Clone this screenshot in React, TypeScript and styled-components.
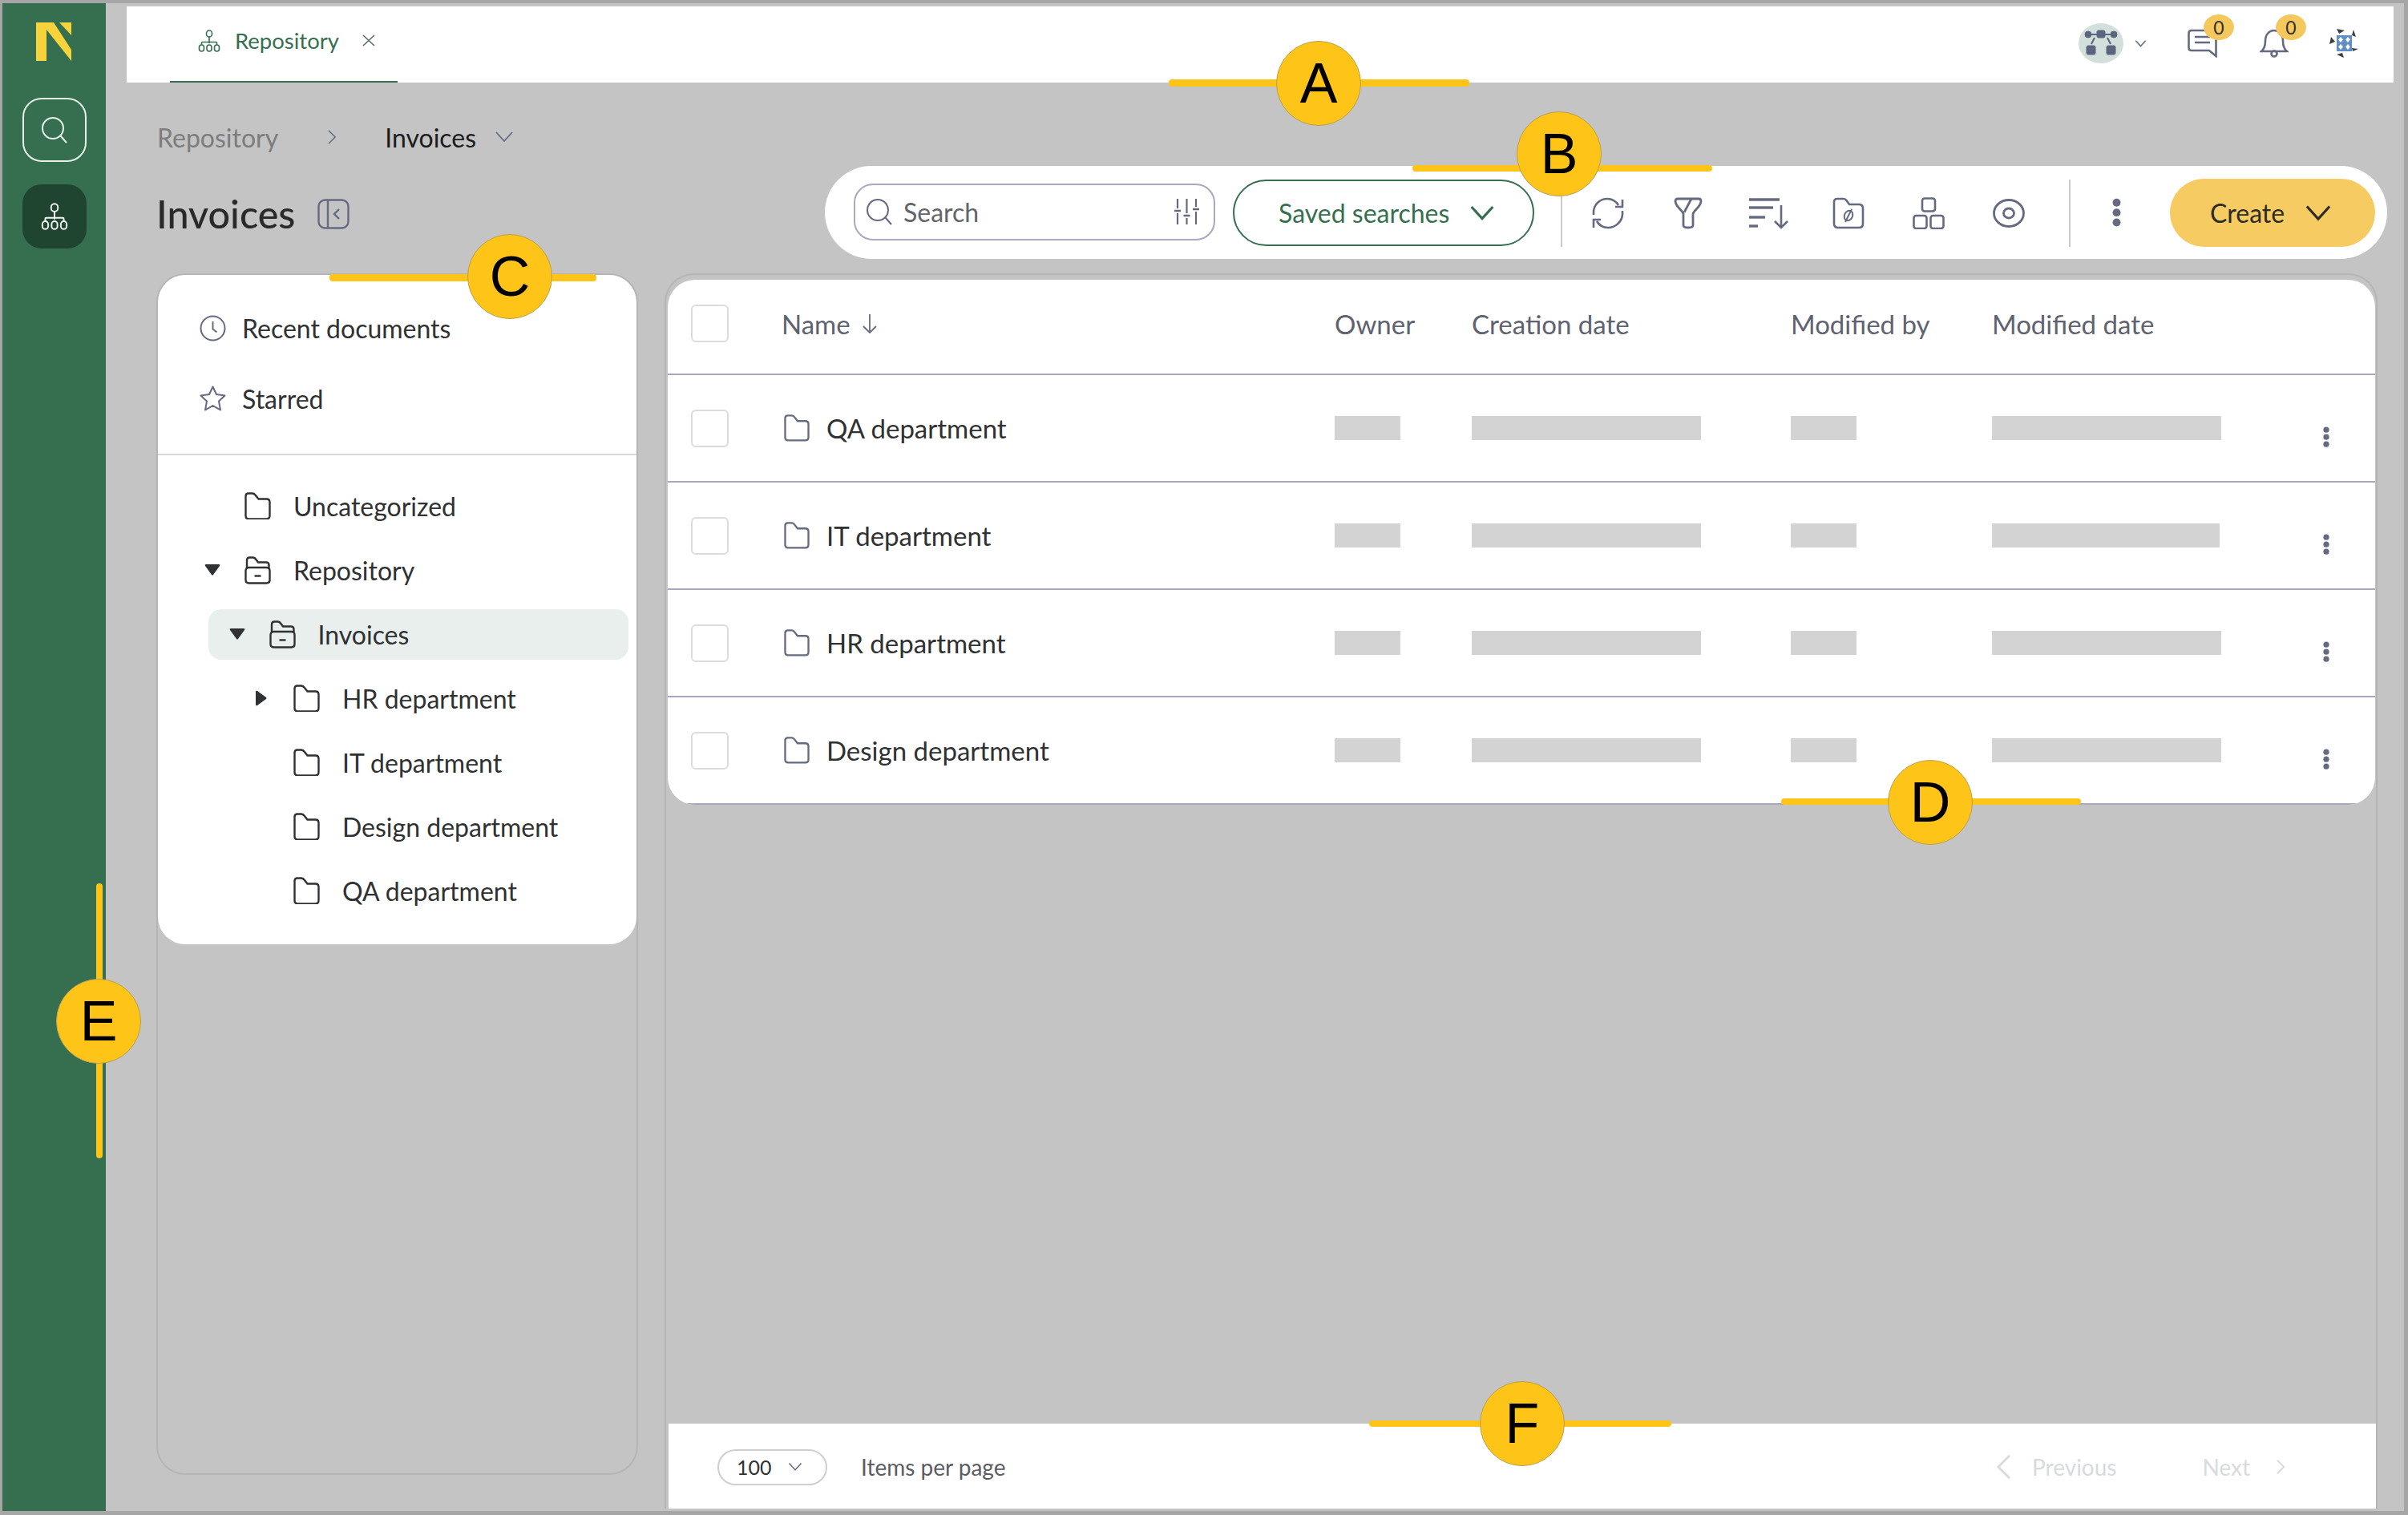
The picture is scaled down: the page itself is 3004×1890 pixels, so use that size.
import React from 'react';
import styled, { createGlobalStyle } from 'styled-components';

const GlobalStyle = createGlobalStyle`
  html, body {
    margin: 0;
    padding: 0;
    background: #c4c4c4;
  }
  * {
    box-sizing: border-box;
  }
`;

const green = '#356f50';
const ink = '#2f3133';
const slate = '#666a80';

/* ---------- icons ---------- */

const HierarchyIcon = ({ color, size }: { color: string; size: number }) => (
  <svg width={size} height={size} viewBox="0 0 28 28" fill="none" stroke={color} strokeWidth="1.6">
    <rect x="10.5" y="1" width="7" height="8" rx="3.5" />
    <path d="M14 9v8M4.5 19v-2.5a1 1 0 0 1 1-1h17a1 1 0 0 1 1 1V19" />
    <rect x="1.5" y="19" width="6" height="8" rx="3" />
    <rect x="11" y="19" width="6" height="8" rx="3" />
    <rect x="20.5" y="19" width="6" height="8" rx="3" />
  </svg>
);

const Chevron = ({ color, size, dir = 'down', weight = 2 }: { color: string; size: number; dir?: string; weight?: number }) => {
  const d: Record<string, string> = {
    down: 'M2 6l10 11L22 6',
    right: 'M7 2l10 10L7 22',
    left: 'M17 2L7 12l10 10',
  };
  return (
    <svg width={size} height={size} viewBox="0 0 24 24" fill="none" stroke={color} strokeWidth={weight}>
      <path d={d[dir]} />
    </svg>
  );
};

const FolderIcon = ({ color, size = 33 }: { color: string; size?: number }) => (
  <svg width={size} height={size * 1.06} viewBox="0 0 33 35" fill="none" stroke={color} strokeWidth="2.4">
    <path d="M1.5 29.5V5Q1.5 1.5 5 1.5H9.5Q12 1.5 13.5 3.5L17.5 8.5H27.5Q31.5 8.5 31.5 12.5V29.5Q31.5 33.5 27.5 33.5H5.5Q1.5 33.5 1.5 29.5Z" />
  </svg>
);

const OpenFolderIcon = ({ color }: { color: string }) => (
  <svg width="33" height="35" viewBox="0 0 33 35" fill="none" stroke={color} strokeWidth="2.4">
    <path d="M3 14V5Q3 1.5 6.5 1.5H10.5Q12.5 1.5 14 3.5L17 7.5H27Q30.5 7.5 30.5 11V14" />
    <path d="M1.5 18Q1.5 14 5.5 14H27.5Q31.5 14 31.5 18V29.5Q31.5 33.5 27.5 33.5H5.5Q1.5 33.5 1.5 29.5Z" />
    <path d="M12.5 24.5H20.5" />
  </svg>
);

const KebabIcon = ({ size, color }: { size: number; color: string }) => (
  <svg width={size} height={size * 3.3} viewBox="0 0 8 26" fill={color}>
    <circle cx="4" cy="4" r="3.6" />
    <circle cx="4" cy="13" r="3.6" />
    <circle cx="4" cy="22" r="3.6" />
  </svg>
);

const LogoMark = () => (
  <svg width="45" height="48" viewBox="0 0 45 48" fill="#f6d33b">
    <polygon points="0,0 22,0 44,34 44,48 13,9 13,48 0,48" />
    <polygon points="29,0 44,0 44,16" />
  </svg>
);

const SearchIcon = ({ color, size, weight = 2 }: { color: string; size: number; weight?: number }) => (
  <svg width={size} height={size} viewBox="0 0 34 34" fill="none" stroke={color} strokeWidth={weight}>
    <circle cx="15" cy="15" r="13" />
    <path d="M24.5 24.5L32 33" />
  </svg>
);

const SlidersIcon = () => (
  <svg width="33" height="34" viewBox="0 0 33 34" fill="none" stroke={slate} strokeWidth="2.2">
    <path d="M5 1v12M5 19v14M16.5 1v18M16.5 25v8M28 1v10M28 17v16" />
    <path d="M1 16h8M12.5 22h8M24 14h8" strokeWidth="2.6" />
  </svg>
);

const RefreshIcon = () => (
  <svg width="40" height="40" viewBox="0 0 40 40" fill="none" stroke={slate} strokeWidth="2.6">
    <path d="M2 22V17C3 9 10 2 19 2c6 0 11 3 14 8" />
    <path d="M38 17v5c-1 9-9 16-18 16-6 0-11-3-14-8" />
    <path d="M38 3v9H29M2 38V28h9" />
  </svg>
);

const FunnelIcon = () => (
  <svg width="36" height="40" viewBox="0 0 36 40" fill="none" stroke={slate} strokeWidth="2.8">
    <path d="M2 5Q2 2 5 2H31Q34 2 34 5C34 12 25 16 24 21V35Q24 38 18 38Q12 38 12 35V21C11 16 2 12 2 5Z" />
    <path d="M22 2L13 19" />
  </svg>
);

const SortIcon = () => (
  <svg width="49" height="40" viewBox="0 0 49 40" fill="none" stroke={slate}>
    <path d="M0 3H38" strokeWidth="3.4" />
    <path d="M0 13H30" strokeWidth="3.4" />
    <path d="M0 25H20" strokeWidth="3.4" />
    <path d="M0 36H11" strokeWidth="3.4" />
    <path d="M40 10V38M32 30l8 8 8-8" strokeWidth="2.6" />
  </svg>
);

const LinkedFolderIcon = () => (
  <svg width="40" height="40" viewBox="0 0 40 40" fill="none" stroke={slate} strokeWidth="2.6">
    <path d="M2 33V6Q2 2 6 2H14Q16 2 17.5 4L21 9H33Q38 9 38 14V33Q38 38 33 38H7Q2 38 2 33Z" />
    <ellipse cx="20" cy="23" rx="5" ry="6.5" strokeWidth="2" transform="rotate(25 20 23)" />
    <path d="M24 15l-8 16" strokeWidth="2" />
  </svg>
);

const BlocksIcon = () => (
  <svg width="40" height="40" viewBox="0 0 40 40" fill="none" stroke={slate} strokeWidth="2.6">
    <rect x="12" y="1.5" width="16" height="16" rx="3" />
    <rect x="1.5" y="23" width="16" height="16" rx="3" />
    <rect x="22.5" y="23" width="16" height="16" rx="3" />
  </svg>
);

const EyeIcon = () => (
  <svg width="40" height="36" viewBox="0 0 40 36" fill="none" stroke={slate} strokeWidth="2.8">
    <ellipse cx="20" cy="18" rx="18.5" ry="16.5" />
    <ellipse cx="20" cy="18" rx="6.5" ry="6" />
  </svg>
);

const ClockIcon = () => (
  <svg width="33" height="33" viewBox="0 0 33 33" fill="none" stroke={slate} strokeWidth="2">
    <circle cx="16.5" cy="16.5" r="15" />
    <path d="M16.5 8v9.5l5 4" />
  </svg>
);

const StarIcon = () => (
  <svg width="33" height="33" viewBox="0 0 33 33" fill="none" stroke={slate} strokeWidth="2" strokeLinejoin="round">
    <path d="M16.5 1.5l4.5 9.5 10.5 1.5-7.5 7 2 11-9.5-5.5L7 30.5l2-11-7.5-7L12 11z" />
  </svg>
);

const PanelToggleIcon = () => (
  <svg width="40" height="38" viewBox="0 0 40 38" fill="none" stroke={slate} strokeWidth="2.4">
    <rect x="1.5" y="1.5" width="37" height="35" rx="8" />
    <path d="M13 1.5v35" />
    <path d="M27 13l-6 6 6 6" />
  </svg>
);

const NetworkIcon = () => (
  <svg width="42" height="34" viewBox="0 0 42 34" fill="#5b6580" stroke="#5b6580">
    <rect x="16" y="1" width="10" height="9" rx="2" />
    <circle cx="5" cy="6" r="4" />
    <circle cx="37" cy="6" r="4" />
    <rect x="3" y="20" width="11" height="11" rx="2" />
    <rect x="28" y="20" width="11" height="11" rx="2" />
    <path d="M9 6h7M26 6h7M13 10l-4 8M29 10l4 8" fill="none" strokeWidth="2" />
  </svg>
);

const ChatIcon = () => (
  <svg width="37" height="36" viewBox="0 0 37 36" fill="none" stroke={slate} strokeWidth="2.6">
    <path d="M5 2H32Q35.5 2 35.5 5.5V34L27 27H5Q1.5 27 1.5 23.5V5.5Q1.5 2 5 2Z" />
    <path d="M9 10h19M9 17h19" />
  </svg>
);

const BellIcon = () => (
  <svg width="36" height="36" viewBox="0 0 36 36" fill="none" stroke={slate} strokeWidth="2.6">
    <path d="M2 28C6 25 7 20 7 15C7 7 12 2 18 2s11 5 11 13c0 5 1 10 5 13z" />
    <circle cx="18" cy="31" r="3.5" />
  </svg>
);

const Identicon = () => (
  <svg width="38" height="38" viewBox="0 0 38 38">
    <circle cx="19" cy="19" r="19" fill="#fff" />
    <rect x="10" y="9" width="19" height="20" fill="#5f8fc5" />
    <g fill="#fff">
      <polygon points="15,11 18,14.5 15,18 12,14.5" />
      <polygon points="24,11 27,14.5 24,18 21,14.5" />
      <polygon points="15,20 18,23.5 15,27 12,23.5" />
      <polygon points="24,20 27,23.5 24,27 21,23.5" />
    </g>
    <g fill="#3d3f44">
      <polygon points="10,1 20,3 13,7" />
      <polygon points="31,2 34,11 29,9" />
      <polygon points="37,26 30,29 29,25" />
      <polygon points="19,37 10,33 17,31" />
      <polygon points="1,20 3,11 8,17" />
    </g>
  </svg>
);

const ArrowDown = () => (
  <svg width="20" height="24" viewBox="0 0 20 24" fill="none" stroke={slate} strokeWidth="1.8">
    <path d="M10 0v23M2 15l8 8 8-8" />
  </svg>
);

const CloseIcon = () => (
  <svg width="16" height="15" viewBox="0 0 16 15" fill="none" stroke="#5a6b63" strokeWidth="1.6">
    <path d="M1 1l14 13M15 1L1 14" />
  </svg>
);

const CaretDown = () => (
  <svg width="20" height="14" viewBox="0 0 20 14" fill={ink}>
    <path d="M2 0h16q2 0 1 2l-8 11q-1 1-2 0L1 2Q0 0 2 0z" />
  </svg>
);

const CaretRight = () => (
  <svg width="14" height="20" viewBox="0 0 14 20" fill={ink}>
    <path d="M0 2q0-2 2-1l11 8q1 1 0 2L2 19q-2 1-2-1z" />
  </svg>
);

/* ---------- frame ---------- */

const Shell = styled.div`
  position: relative;
  display: flex;
  width: 3004px;
  height: 1890px;
  overflow: hidden;
  background: #c4c4c4;
  border-style: solid;
  border-color: #a6a6a6;
  border-width: 4px 5px 5px 3px;
  font-family: Lato, 'Open Sans', sans-serif;
  color: ${ink};
`;

const Sidebar = styled.aside`
  display: flex;
  flex-direction: column;
  align-items: center;
  flex: 0 0 129px;
  padding-top: 24px;
  background: ${green};
`;

const SideSearch = styled.button`
  display: flex;
  align-items: center;
  justify-content: center;
  width: 80px;
  height: 80px;
  margin-top: 46px;
  padding: 0;
  background: transparent;
  border: 2px solid #e6f0ea;
  border-radius: 24px;
`;

const SideActive = styled.button`
  display: flex;
  align-items: center;
  justify-content: center;
  width: 80px;
  height: 80px;
  margin-top: 28px;
  padding: 0;
  background: #1f4430;
  border: none;
  border-radius: 24px;
`;

const Main = styled.div`
  display: flex;
  flex-direction: column;
  flex: 1;
  min-width: 0;
  padding-top: 4px;
`;

/* ---------- top header ---------- */

const Header = styled.header`
  display: flex;
  align-items: stretch;
  justify-content: space-between;
  flex: 0 0 95px;
  margin: 0 13px 0 26px;
  padding: 0 43px 0 54px;
  background: #fff;
`;

const Tab = styled.div`
  display: flex;
  align-items: center;
  width: 284px;
  padding: 0 0 8px 35px;
  border-bottom: 2px solid ${green};
  font-size: 27.5px;
  color: ${green};
`;

const TabLabel = styled.span`
  margin: 0 29px 0 18px;
  line-height: 1;
`;

const HeaderTools = styled.div`
  display: flex;
  align-items: center;
  padding-bottom: 3px;
`;

const OrgAvatar = styled.div`
  display: flex;
  align-items: center;
  justify-content: center;
  width: 56px;
  height: 50px;
  background: #d3dfdb;
  border-radius: 50%;
`;

const OrgChevron = styled.span`
  display: flex;
  margin: 0 51px 0 14px;
`;

const AlertIcon = styled.div`
  position: relative;
  display: flex;
  margin-right: ${(p: { $gap: number }) => p.$gap}px;
`;

const CountBadge = styled.span`
  position: absolute;
  top: -18px;
  left: 20px;
  width: 38px;
  height: 32px;
  background: #f5c85e;
  border-radius: 50%;
  font-size: 23px;
  line-height: 32px;
  text-align: center;
  color: #33302a;
`;

/* ---------- page heading ---------- */

const Content = styled.div`
  display: flex;
  flex-direction: column;
  flex: 1;
  min-height: 0;
  padding: 48px 21px 3px 63px;
`;

const Breadcrumbs = styled.nav`
  display: flex;
  align-items: center;
  height: 40px;
  padding-left: 1px;
  font-size: 32px;
`;

const CrumbParent = styled.span`
  color: #7d7d7d;
`;

const CrumbArrow = styled.span`
  display: flex;
  margin: 0 56px 0 57px;
`;

const CrumbCurrent = styled.span`
  margin-right: 23px;
  color: #1c1c1c;
`;

const HeadingRow = styled.div`
  display: flex;
  align-items: center;
  justify-content: space-between;
  height: 116px;
  margin-top: 16px;
`;

const Title = styled.div`
  display: flex;
  align-items: center;
  gap: 28px;
  padding-top: 3px;
`;

const TitleText = styled.h1`
  margin: 0;
  font-size: 48.5px;
  font-weight: 500;
  line-height: 1;
  color: #2a2a2a;
`;

const Toolbar = styled.div`
  display: flex;
  align-items: center;
  width: 1949px;
  height: 116px;
  padding: 1px 15px 0 36px;
  background: #fff;
  border-radius: 58px;
`;

const SearchBox = styled.div`
  display: flex;
  align-items: center;
  width: 451px;
  height: 71px;
  margin-top: -3px;
  padding: 0 17px 0 13px;
  border: 2px solid #a9a8c0;
  border-radius: 24px;
`;

const SearchText = styled.span`
  flex: 1;
  margin-left: 13px;
  font-size: 32px;
  color: #63656b;
`;

const SavedButton = styled.button`
  display: flex;
  align-items: center;
  gap: 25px;
  height: 83px;
  width: 376px;
  margin-left: 22px;
  padding: 0 0 0 55px;
  background: #fff;
  border: 2px solid ${green};
  border-radius: 42px;
  font-family: inherit;
  font-size: 32px;
  color: ${green};
`;

const Divider = styled.span`
  flex: 0 0 2px;
  height: 84px;
  margin-left: ${(p: { $left: number; $right: number }) => p.$left}px;
  margin-right: ${(p: { $left: number; $right: number }) => p.$right}px;
  background: #c9c9cf;
`;

const ToolSlot = styled.span`
  display: flex;
  align-items: center;
  justify-content: center;
  flex: 0 0 100px;
`;

const ToolKebab = styled.span`
  display: flex;
  margin-left: 52px;
`;

const CreateButton = styled.button`
  display: flex;
  align-items: center;
  gap: 25px;
  width: 256px;
  height: 85px;
  margin-left: 61px;
  padding: 0 0 0 50px;
  background: #f5cb62;
  border: none;
  border-radius: 43px;
  font-family: inherit;
  font-size: 32px;
  color: #2e2b25;
`;

/* ---------- columns ---------- */

const Columns = styled.div`
  display: flex;
  flex: 1;
  min-height: 0;
  gap: 33px;
  margin-top: 18px;
`;

const TreePanel = styled.div`
  flex: 0 0 601px;
  height: 1499px;
  border: 2px solid #b5b5b5;
  border-radius: 36px;
`;

const TreeCard = styled.div`
  padding: 22px 0 27px;
  background: #fff;
  border-radius: 34px;
`;

const QuickRow = styled.div`
  display: flex;
  align-items: center;
  gap: 20px;
  height: 88px;
  padding-left: 52px;
  font-size: 32px;
`;

const TreeRule = styled.hr`
  height: 2px;
  margin: 25px 0 23px;
  background: #d8d8d8;
  border: none;
`;

const TreeList = styled.div`
  display: flex;
  flex-direction: column;
  gap: 17px;
  padding: 8.5px 0;
`;

const TreeRow = styled.div<{ $depth: number; $selected?: boolean }>`
  display: flex;
  align-items: center;
  height: 63px;
  margin: 0 10px 0 ${(p) => (p.$selected ? 63 : 0)}px;
  padding-left: ${(p) => 58 + p.$depth * 30.5 - (p.$selected ? 63 : 0)}px;
  background: ${(p) => (p.$selected ? '#e9efed' : 'transparent')};
  border-radius: 16px;
  font-size: 32px;
`;

const CaretSlot = styled.span`
  display: flex;
  align-items: center;
  justify-content: center;
  flex: 0 0 20px;
  margin-right: 30px;
`;

const TreeLabel = styled.span`
  margin-left: 28px;
`;

const TablePanel = styled.section`
  display: flex;
  flex-direction: column;
  justify-content: space-between;
  flex: 1;
  margin-right: 12px;
  border: solid #b5b5b5;
  border-width: 2px 2px 0;
  border-radius: 36px 36px 0 0;
`;

const TableCard = styled.div`
  margin: 6px 1px 0 2px;
  background: #fff;
  border-radius: 34px;
  overflow: hidden;
`;

const gridColumns = '113px 690px 171px 398px 251px 403px 28px';

const HeadRow = styled.div`
  display: grid;
  grid-template-columns: ${gridColumns};
  align-items: center;
  height: 119px;
  padding: 0 0 8px 29px;
  border-bottom: 2px solid #a8a7bd;
  font-size: 33px;
  color: #5f6270;
`;

const BodyRow = styled.div`
  display: grid;
  grid-template-columns: ${gridColumns};
  align-items: center;
  height: 134px;
  padding-left: 29px;
  border-bottom: 2px solid #a8a7bd;
  font-size: 33px;
`;

const Checkbox = styled.span`
  display: block;
  width: 47px;
  height: 47px;
  border: 2px solid #dcdcdc;
  border-radius: 6px;
`;

const SortLabel = styled.span`
  display: flex;
  align-items: center;
  gap: 14px;
`;

const NameCell = styled.span`
  display: flex;
  align-items: center;
  gap: 21px;
  padding-left: 3px;
`;

const Skeleton = styled.span<{ $width: number }>`
  display: block;
  width: ${(p) => p.$width}px;
  height: 30px;
  background: #d3d3d3;
`;

const RowKebab = styled.span`
  display: flex;
  justify-content: center;
  padding-top: 22px;
`;

const Footer = styled.footer`
  display: flex;
  align-items: center;
  justify-content: space-between;
  height: 106px;
  margin: 0 0 0 3px;
  padding: 2px 109px 0 61px;
  background: #fff;
  font-size: 28px;
  color: #5b5d63;
`;

const PageSize = styled.div`
  display: flex;
  align-items: center;
  gap: 20px;
`;

const SizeSelect = styled.span`
  display: flex;
  align-items: center;
  gap: 20px;
  width: 137px;
  height: 45px;
  padding-left: 22px;
  border: 2px solid #cfcfcf;
  border-radius: 23px;
  font-size: 25px;
  margin-right: 22px;
  color: #2f3133;
`;

const Pager = styled.div`
  display: flex;
  align-items: center;
  font-size: 28px;
  color: #d7dbde;
`;

const PagerLink = styled.span<{ $gap: number }>`
  display: flex;
  align-items: center;
  gap: ${(p) => p.$gap}px;
`;

const PagerSpacer = styled.span`
  width: 107px;
`;

/* ---------- callouts that sit over the screenshot ---------- */

const Overlay = styled.div`
  position: absolute;
  top: -4px;
  left: -3px;
  width: 3004px;
  height: 1890px;
  pointer-events: none;
`;

const CalloutBar = styled.span<{ $x: number; $y: number; $w: number; $h: number }>`
  position: absolute;
  left: ${(p) => p.$x}px;
  top: ${(p) => p.$y}px;
  width: ${(p) => p.$w}px;
  height: ${(p) => p.$h}px;
  background: #fec418;
  border-radius: 4px;
`;

const CalloutDot = styled.span<{ $x: number; $y: number }>`
  position: absolute;
  left: ${(p) => p.$x - 53}px;
  top: ${(p) => p.$y - 53}px;
  width: 106px;
  height: 106px;
  background: #fec418;
  border: 1px solid #b8a050;
  border-radius: 50%;
  font-family: 'Liberation Sans', Arial, sans-serif;
  font-size: 70px;
  line-height: 104px;
  text-align: center;
  color: #000;
`;

const callouts = [
  { letter: 'A', x: 1645, y: 104, bar: { x: 1458, y: 99, w: 375, h: 9 } },
  { letter: 'B', x: 1945, y: 192, bar: { x: 1762, y: 206, w: 374, h: 8 } },
  { letter: 'C', x: 636, y: 345, bar: { x: 411, y: 342, w: 333, h: 9 } },
  { letter: 'D', x: 2408, y: 1001, bar: { x: 2222, y: 996, w: 374, h: 8 } },
  { letter: 'E', x: 123, y: 1274, bar: { x: 120, y: 1102, w: 8, h: 343 } },
  { letter: 'F', x: 1899, y: 1776, bar: { x: 1708, y: 1772, w: 377, h: 8 } },
];

const folders = [
  { name: 'QA department', skeletons: [82, 286, 82, 286] },
  { name: 'IT department', skeletons: [82, 286, 82, 284] },
  { name: 'HR department', skeletons: [82, 286, 82, 286] },
  { name: 'Design department', skeletons: [82, 286, 82, 286] },
];

const treeChildren = ['IT department', 'Design department', 'QA department'];

const App: React.FC = () => (
  <>
    <GlobalStyle />
    <Shell>
      <Sidebar>
        <LogoMark />
        <SideSearch>
          <SearchIcon color="#e6f0ea" size={34} />
        </SideSearch>
        <SideActive>
          <HierarchyIcon color="#f1f5f2" size={34} />
        </SideActive>
      </Sidebar>

      <Main>
        <Header>
          <Tab>
            <HierarchyIcon color={green} size={28} />
            <TabLabel>Repository</TabLabel>
            <CloseIcon />
          </Tab>
          <HeaderTools>
            <OrgAvatar>
              <NetworkIcon />
            </OrgAvatar>
            <OrgChevron>
              <Chevron color={slate} size={15} weight={2.4} />
            </OrgChevron>
            <AlertIcon $gap={53}>
              <ChatIcon />
              <CountBadge>0</CountBadge>
            </AlertIcon>
            <AlertIcon $gap={50}>
              <BellIcon />
              <CountBadge>0</CountBadge>
            </AlertIcon>
            <Identicon />
          </HeaderTools>
        </Header>

        <Content>
          <Breadcrumbs>
            <CrumbParent>Repository</CrumbParent>
            <CrumbArrow>
              <Chevron color={slate} size={20} dir="right" weight={1.8} />
            </CrumbArrow>
            <CrumbCurrent>Invoices</CrumbCurrent>
            <Chevron color={slate} size={24} weight={1.8} />
          </Breadcrumbs>

          <HeadingRow>
            <Title>
              <TitleText>Invoices</TitleText>
              <PanelToggleIcon />
            </Title>
            <Toolbar>
              <SearchBox>
                <SearchIcon color={slate} size={34} />
                <SearchText>Search</SearchText>
                <SlidersIcon />
              </SearchBox>
              <SavedButton>
                Saved searches
                <Chevron color={green} size={32} weight={2.4} />
              </SavedButton>
              <Divider $left={33} $right={7} />
              <ToolSlot>
                <RefreshIcon />
              </ToolSlot>
              <ToolSlot>
                <FunnelIcon />
              </ToolSlot>
              <ToolSlot>
                <SortIcon />
              </ToolSlot>
              <ToolSlot>
                <LinkedFolderIcon />
              </ToolSlot>
              <ToolSlot>
                <BlocksIcon />
              </ToolSlot>
              <ToolSlot>
                <EyeIcon />
              </ToolSlot>
              <Divider $left={25} $right={0} />
              <ToolKebab>
                <KebabIcon size={11} color={slate} />
              </ToolKebab>
              <CreateButton>
                Create
                <Chevron color="#2e2b25" size={34} weight={2.2} />
              </CreateButton>
            </Toolbar>
          </HeadingRow>

          <Columns>
            <TreePanel>
              <TreeCard>
                <QuickRow>
                  <ClockIcon />
                  Recent documents
                </QuickRow>
                <QuickRow>
                  <StarIcon />
                  Starred
                </QuickRow>
                <TreeRule />
                <TreeList>
                  <TreeRow $depth={0}>
                    <CaretSlot />
                    <FolderIcon color={ink} />
                    <TreeLabel>Uncategorized</TreeLabel>
                  </TreeRow>
                  <TreeRow $depth={0}>
                    <CaretSlot>
                      <CaretDown />
                    </CaretSlot>
                    <OpenFolderIcon color={ink} />
                    <TreeLabel>Repository</TreeLabel>
                  </TreeRow>
                  <TreeRow $depth={1} $selected>
                    <CaretSlot>
                      <CaretDown />
                    </CaretSlot>
                    <OpenFolderIcon color={ink} />
                    <TreeLabel>Invoices</TreeLabel>
                  </TreeRow>
                  <TreeRow $depth={2}>
                    <CaretSlot>
                      <CaretRight />
                    </CaretSlot>
                    <FolderIcon color={ink} />
                    <TreeLabel>HR department</TreeLabel>
                  </TreeRow>
                  {treeChildren.map((name) => (
                    <TreeRow $depth={2} key={name}>
                      <CaretSlot />
                      <FolderIcon color={ink} />
                      <TreeLabel>{name}</TreeLabel>
                    </TreeRow>
                  ))}
                </TreeList>
              </TreeCard>
            </TreePanel>

            <TablePanel>
              <TableCard>
                <HeadRow>
                  <Checkbox />
                  <SortLabel>
                    Name
                    <ArrowDown />
                  </SortLabel>
                  <span>Owner</span>
                  <span>Creation date</span>
                  <span>Modified by</span>
                  <span>Modified date</span>
                </HeadRow>
                {folders.map((folder) => (
                  <BodyRow key={folder.name}>
                    <Checkbox />
                    <NameCell>
                      <FolderIcon color={slate} size={32} />
                      {folder.name}
                    </NameCell>
                    {folder.skeletons.map((width, i) => (
                      <Skeleton $width={width} key={i} />
                    ))}
                    <RowKebab>
                      <KebabIcon size={8} color={slate} />
                    </RowKebab>
                  </BodyRow>
                ))}
              </TableCard>
              <Footer>
                <PageSize>
                  <SizeSelect>
                    100
                    <Chevron color={slate} size={18} weight={2} />
                  </SizeSelect>
                  Items per page
                </PageSize>
                <Pager>
                  <PagerLink $gap={18}>
                    <Chevron color="#d7dbde" size={34} dir="left" weight={2} />
                    Previous
                  </PagerLink>
                  <PagerSpacer />
                  <PagerLink $gap={28}>
                    Next
                    <Chevron color="#d7dbde" size={20} dir="right" weight={2.4} />
                  </PagerLink>
                </Pager>
              </Footer>
            </TablePanel>
          </Columns>
        </Content>
      </Main>

      <Overlay>
        {callouts.map((c) => (
          <React.Fragment key={c.letter}>
            <CalloutBar $x={c.bar.x} $y={c.bar.y} $w={c.bar.w} $h={c.bar.h} />
            <CalloutDot $x={c.x} $y={c.y}>
              {c.letter}
            </CalloutDot>
          </React.Fragment>
        ))}
      </Overlay>
    </Shell>
  </>
);

export default App;
